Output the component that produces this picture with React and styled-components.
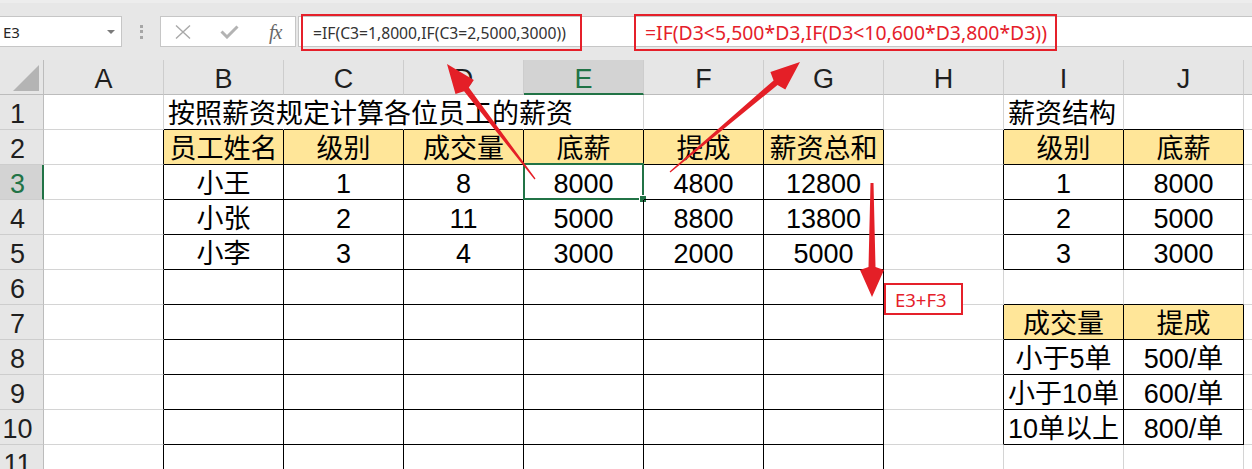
import React from 'react';
import styled, { createGlobalStyle } from 'styled-components';

const GlobalStyle = createGlobalStyle`
  html, body { margin: 0; padding: 0; background: #ffffff; overflow: hidden; }
  body { font-family: "Liberation Sans", "Noto Sans CJK SC", sans-serif; }
`;

const RED = '#e5202a';
const GREEN = '#217346';

const Page = styled.div`
  position: relative;
  width: 1252px;
  height: 469px;
  overflow: hidden;
  background: #e7e7e7;
`;

const Toolbar = styled.div`
  height: 60px;
  box-sizing: border-box;
  display: flex;
  align-items: flex-start;
  background: #e7e7e7;
  border-top: 3px solid #ededed;
  padding-top: 13px;
`;

const NameBox = styled.div`
  width: 126px;
  height: 31px;
  margin-left: -4px;
  box-sizing: border-box;
  border: 1px solid #c6c6c6;
  background: #fff;
  display: flex;
  align-items: center;
  padding-left: 6px;
  font-family: "Noto Sans", sans-serif;
  font-size: 15px;
  color: #262626;
`;

const Caret = styled.span`
  margin-left: auto;
  margin-right: 6px;
  width: 0;
  height: 0;
  border-left: 4px solid transparent;
  border-right: 4px solid transparent;
  border-top: 4px solid #7a7a7a;
`;

const Grip = styled.div`
  width: 38px;
  height: 31px;
  display: flex;
  flex-direction: column;
  align-items: center;
  justify-content: center;
  gap: 2.5px;
`;

const GripDot = styled.span`
  width: 3px;
  height: 3px;
  background: #a6a6a6;
`;

const FxBox = styled.div`
  width: 136px;
  height: 31px;
  box-sizing: border-box;
  border: 1px solid #c6c6c6;
  background: #fff;
  display: flex;
  align-items: center;
`;

const FxIcon = styled.span`
  display: flex;
  align-items: center;
  margin-left: ${p => p.$gap}px;
`;

const FxText = styled.span`
  margin-left: 30px;
  font-family: "Liberation Serif", serif;
  font-style: italic;
  font-size: 20px;
  color: #6a6a6a;
  letter-spacing: -1px;
  line-height: 1;
`;

const FormulaBar = styled.div`
  flex: 1;
  height: 31px;
  margin-left: 2px;
  box-sizing: border-box;
  border: 1px solid #c6c6c6;
  border-right: none;
  background: #fff;
  display: flex;
  align-items: flex-start;
`;

const FormulaBox = styled.div`
  box-sizing: border-box;
  width: ${p => p.$w}px;
  height: 37px;
  margin-top: -3px;
  margin-left: ${p => p.$ml}px;
  border: 2px solid ${RED};
  display: flex;
  align-items: center;
  padding-left: ${p => p.$pl}px;
  font-family: "Noto Sans", sans-serif;
  font-size: ${p => p.$fs}px;
  color: ${p => p.$color};
  white-space: nowrap;
`;

const Sheet = styled.div`
  display: grid;
  grid-template-columns: 44px repeat(10, 120px) 1fr;
  grid-auto-rows: 35px;
  background: #fff;
`;

const headerBase = `
  box-sizing: border-box;
  font-size: 27px;
  line-height: 32px;
  padding-top: 3px;
  text-align: center;
  white-space: nowrap;
`;

const Corner = styled.div`
  ${headerBase}
  padding: 0;
  background: #e6e6e6;
  border-right: 1px solid #bcbcbc;
  border-bottom: 1px solid #bcbcbc;
`;

const ColHeader = styled.div`
  ${headerBase}
  background: ${p => (p.$sel ? '#d3d3d3' : '#e6e6e6')};
  color: ${p => (p.$sel ? GREEN : '#1f1f1f')};
  border-right: 1px solid #cdcdcd;
  border-bottom: ${p => (p.$sel ? `2px solid ${GREEN}` : '1px solid #bcbcbc')};
`;

const RowHeader = styled.div`
  ${headerBase}
  padding-right: ${p => (p.$sel ? 7 : 8)}px;
  background: ${p => (p.$sel ? '#d3d3d3' : '#e6e6e6')};
  color: ${p => (p.$sel ? GREEN : '#1f1f1f')};
  border-right: ${p => (p.$sel ? `2px solid ${GREEN}` : '1px solid #bcbcbc')};
  border-bottom: 1px solid #cdcdcd;
`;

const Cell = styled.div`
  box-sizing: border-box;
  position: relative;
  border-right: 1px solid ${p => p.$right};
  border-bottom: 1px solid ${p => p.$bottom};
  background: ${p => p.$fill || 'transparent'};
  font-size: 27px;
  line-height: 32px;
  padding: 3px 4px 0 4px;
  text-align: ${p => p.$align};
  white-space: nowrap;
  color: #000;
  z-index: ${p => (p.$over ? 1 : 'auto')};
`;

const Selection = styled.div`
  position: absolute;
  top: -2px;
  left: -1px;
  right: -1px;
  bottom: -1px;
  border: 2px solid ${GREEN};
  pointer-events: none;
`;

const FillHandle = styled.span`
  position: absolute;
  right: -5px;
  bottom: -5px;
  width: 6px;
  height: 6px;
  background: ${GREEN};
  border: 1px solid #fff;
`;

const Overlay = styled.svg`
  position: absolute;
  top: 0;
  left: 0;
  pointer-events: none;
  z-index: 5;
`;

const NoteBox = styled.div`
  position: absolute;
  left: 884px;
  top: 283px;
  width: 79px;
  height: 32px;
  box-sizing: border-box;
  border: 2px solid ${RED};
  background: #fff;
  color: ${RED};
  font-family: "Noto Sans", sans-serif;
  font-size: 18.5px;
  display: flex;
  align-items: center;
  padding-left: 9px;
  z-index: 6;
`;

const COLS = ['A', 'B', 'C', 'D', 'E', 'F', 'G', 'H', 'I', 'J', 'K'];
const ROWS = [1, 2, 3, 4, 5, 6, 7, 8, 9, 10, 11];

const data = {
  1: { B: '按照薪资规定计算各位员工的薪资', I: '薪资结构' },
  2: { B: '员工姓名', C: '级别', D: '成交量', E: '底薪', F: '提成', G: '薪资总和', I: '级别', J: '底薪' },
  3: { B: '小王', C: '1', D: '8', E: '8000', F: '4800', G: '12800', I: '1', J: '8000' },
  4: { B: '小张', C: '2', D: '11', E: '5000', F: '8800', G: '13800', I: '2', J: '5000' },
  5: { B: '小李', C: '3', D: '4', E: '3000', F: '2000', G: '5000', I: '3', J: '3000' },
  7: { I: '成交量', J: '提成' },
  8: { I: '小于5单', J: '500/单' },
  9: { I: '小于10单', J: '600/单' },
  10: { I: '10单以上', J: '800/单' },
};

const leftAligned = { '1B': true, '1I': true };

const ranges = [
  { r1: 2, r2: 11, c1: 1, c2: 6 },
  { r1: 2, r2: 5, c1: 8, c2: 9 },
  { r1: 7, r2: 10, c1: 8, c2: 9 },
];

const inRange = (r, c) => ranges.some(g => r >= g.r1 && r <= g.r2 && c >= g.c1 && c <= g.c2);
const isYellow = (r, c) =>
  (r === 2 && ((c >= 1 && c <= 6) || (c >= 8 && c <= 9))) || (r === 7 && c >= 8 && c <= 9);

function arrowPoints(tail, tip, headLen, headHalf, tailHalf, neckHalf) {
  const dx = tip[0] - tail[0];
  const dy = tip[1] - tail[1];
  const len = Math.hypot(dx, dy);
  const u = [dx / len, dy / len];
  const n = [-u[1], u[0]];
  const base = [tip[0] - u[0] * headLen, tip[1] - u[1] * headLen];
  const neck = [base[0] - u[0] * 3, base[1] - u[1] * 3];
  const pts = [
    [tail[0] + n[0] * tailHalf, tail[1] + n[1] * tailHalf],
    [neck[0] + n[0] * neckHalf, neck[1] + n[1] * neckHalf],
    [base[0] + n[0] * headHalf, base[1] + n[1] * headHalf],
    tip,
    [base[0] - n[0] * headHalf, base[1] - n[1] * headHalf],
    [neck[0] - n[0] * neckHalf, neck[1] - n[1] * neckHalf],
    [tail[0] - n[0] * tailHalf, tail[1] - n[1] * tailHalf],
  ];
  return pts.map(p => `${p[0].toFixed(1)},${p[1].toFixed(1)}`).join(' ');
}

const arrows = [
  { tail: [535, 179], tip: [447, 64], head: 29, half: 11.5, th: 0.6, nh: 3 },
  { tail: [670, 172], tip: [800, 62], head: 29, half: 11.5, th: 0.6, nh: 3 },
  { tail: [872, 183], tip: [872, 297], head: 27, half: 12, th: 1.5, nh: 3.5 },
];

function renderCell(r, c) {
  const col = COLS[c];
  const text = (data[r] && data[r][col]) || '';
  const self = inRange(r, c);
  const rightBlack = self || inRange(r, c + 1);
  const bottomBlack = self || inRange(r + 1, c);
  let right = rightBlack ? '#000' : '#d4d4d4';
  if (r === 1 && c >= 1 && c <= 3) right = 'transparent';
  const bottom = bottomBlack ? '#000' : '#d4d4d4';
  const left = leftAligned[`${r}${col}`];
  const selected = r === 3 && col === 'E';
  return (
    <Cell
      key={`${r}-${col}`}
      $right={right}
      $bottom={bottom}
      $fill={isYellow(r, c) ? '#ffe699' : null}
      $align={left ? 'left' : 'center'}
      $over={left}
    >
      {text}
      {selected && (
        <Selection>
          <FillHandle />
        </Selection>
      )}
    </Cell>
  );
}

export default function App() {
  return (
    <Page>
      <GlobalStyle />
      <Toolbar>
        <NameBox>
          E3
          <Caret />
        </NameBox>
        <Grip>
          <GripDot />
          <GripDot />
          <GripDot />
        </Grip>
        <FxBox>
          <FxIcon $gap={14}>
            <svg width="16" height="14" viewBox="0 0 16 14">
              <path d="M1 0.5 L15 13.5 M15 0.5 L1 13.5" stroke="#a9a9a9" strokeWidth="1.4" fill="none" />
            </svg>
          </FxIcon>
          <FxIcon $gap={29}>
            <svg width="19" height="14" viewBox="0 0 19 14">
              <path d="M1.5 6.5 L7 12 L17.5 1.5" stroke="#b3b3b3" strokeWidth="3" fill="none" />
            </svg>
          </FxIcon>
          <FxText>fx</FxText>
        </FxBox>
        <FormulaBar>
          <FormulaBox $w={281} $ml={2} $pl={10} $fs={15.7} $color="#333">
            =IF(C3=1,8000,IF(C3=2,5000,3000))
          </FormulaBox>
          <FormulaBox $w={423} $ml={52} $pl={9} $fs={19.4} $color={RED}>
            =IF(D3&lt;5,500*D3,IF(D3&lt;10,600*D3,800*D3))
          </FormulaBox>
        </FormulaBar>
      </Toolbar>
      <Sheet>
        <Corner>
          <svg width="43" height="34" viewBox="0 0 43 34">
            <polygon points="39,5 39,31 13,31" fill="#b4b4b4" />
          </svg>
        </Corner>
        {COLS.map(col => (
          <ColHeader key={col} $sel={col === 'E'}>
            {col === 'K' ? '' : col}
          </ColHeader>
        ))}
        {ROWS.map(r => (
          <React.Fragment key={r}>
            <RowHeader $sel={r === 3}>{r}</RowHeader>
            {COLS.map((_, c) => renderCell(r, c))}
          </React.Fragment>
        ))}
      </Sheet>
      <Overlay width="1252" height="469" viewBox="0 0 1252 469">
        {arrows.map((a, i) => (
          <polygon key={i} points={arrowPoints(a.tail, a.tip, a.head, a.half, a.th, a.nh)} fill="#e41f27" />
        ))}
      </Overlay>
      <NoteBox>E3+F3</NoteBox>
    </Page>
  );
}
